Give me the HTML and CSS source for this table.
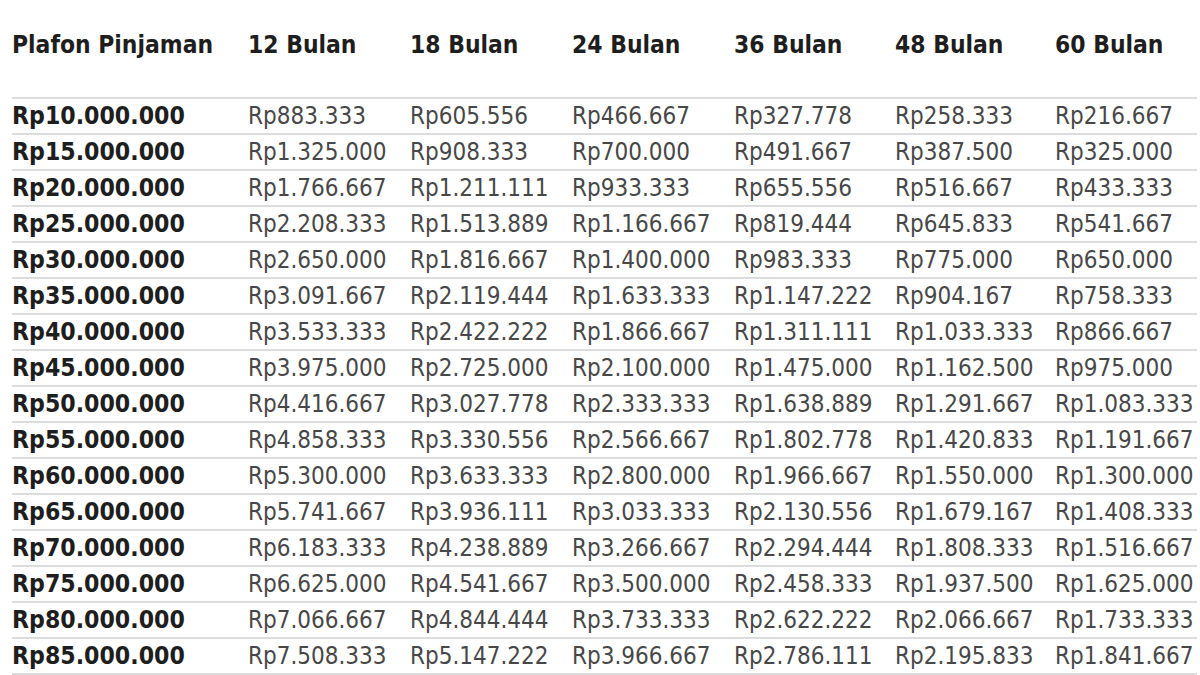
FILE: index.html
```html
<!DOCTYPE html>
<html lang="id">
<head>
<meta charset="utf-8">
<title>Tabel Angsuran</title>
<link rel="stylesheet" href="styles.css">
</head>
<body>
<div class="table">
  <div class="row head">
    <div>Plafon Pinjaman</div><div>12 Bulan</div><div>18 Bulan</div><div>24 Bulan</div><div>36 Bulan</div><div>48 Bulan</div><div>60 Bulan</div>
  </div>
  <div class="row"><div class="key">Rp10.000.000</div><div>Rp883.333</div><div>Rp605.556</div><div>Rp466.667</div><div>Rp327.778</div><div>Rp258.333</div><div>Rp216.667</div></div>
  <div class="row"><div class="key">Rp15.000.000</div><div>Rp1.325.000</div><div>Rp908.333</div><div>Rp700.000</div><div>Rp491.667</div><div>Rp387.500</div><div>Rp325.000</div></div>
  <div class="row"><div class="key">Rp20.000.000</div><div>Rp1.766.667</div><div>Rp1.211.111</div><div>Rp933.333</div><div>Rp655.556</div><div>Rp516.667</div><div>Rp433.333</div></div>
  <div class="row"><div class="key">Rp25.000.000</div><div>Rp2.208.333</div><div>Rp1.513.889</div><div>Rp1.166.667</div><div>Rp819.444</div><div>Rp645.833</div><div>Rp541.667</div></div>
  <div class="row"><div class="key">Rp30.000.000</div><div>Rp2.650.000</div><div>Rp1.816.667</div><div>Rp1.400.000</div><div>Rp983.333</div><div>Rp775.000</div><div>Rp650.000</div></div>
  <div class="row"><div class="key">Rp35.000.000</div><div>Rp3.091.667</div><div>Rp2.119.444</div><div>Rp1.633.333</div><div>Rp1.147.222</div><div>Rp904.167</div><div>Rp758.333</div></div>
  <div class="row"><div class="key">Rp40.000.000</div><div>Rp3.533.333</div><div>Rp2.422.222</div><div>Rp1.866.667</div><div>Rp1.311.111</div><div>Rp1.033.333</div><div>Rp866.667</div></div>
  <div class="row"><div class="key">Rp45.000.000</div><div>Rp3.975.000</div><div>Rp2.725.000</div><div>Rp2.100.000</div><div>Rp1.475.000</div><div>Rp1.162.500</div><div>Rp975.000</div></div>
  <div class="row"><div class="key">Rp50.000.000</div><div>Rp4.416.667</div><div>Rp3.027.778</div><div>Rp2.333.333</div><div>Rp1.638.889</div><div>Rp1.291.667</div><div>Rp1.083.333</div></div>
  <div class="row"><div class="key">Rp55.000.000</div><div>Rp4.858.333</div><div>Rp3.330.556</div><div>Rp2.566.667</div><div>Rp1.802.778</div><div>Rp1.420.833</div><div>Rp1.191.667</div></div>
  <div class="row"><div class="key">Rp60.000.000</div><div>Rp5.300.000</div><div>Rp3.633.333</div><div>Rp2.800.000</div><div>Rp1.966.667</div><div>Rp1.550.000</div><div>Rp1.300.000</div></div>
  <div class="row"><div class="key">Rp65.000.000</div><div>Rp5.741.667</div><div>Rp3.936.111</div><div>Rp3.033.333</div><div>Rp2.130.556</div><div>Rp1.679.167</div><div>Rp1.408.333</div></div>
  <div class="row"><div class="key">Rp70.000.000</div><div>Rp6.183.333</div><div>Rp4.238.889</div><div>Rp3.266.667</div><div>Rp2.294.444</div><div>Rp1.808.333</div><div>Rp1.516.667</div></div>
  <div class="row"><div class="key">Rp75.000.000</div><div>Rp6.625.000</div><div>Rp4.541.667</div><div>Rp3.500.000</div><div>Rp2.458.333</div><div>Rp1.937.500</div><div>Rp1.625.000</div></div>
  <div class="row"><div class="key">Rp80.000.000</div><div>Rp7.066.667</div><div>Rp4.844.444</div><div>Rp3.733.333</div><div>Rp2.622.222</div><div>Rp2.066.667</div><div>Rp1.733.333</div></div>
  <div class="row last"><div class="key">Rp85.000.000</div><div>Rp7.508.333</div><div>Rp5.147.222</div><div>Rp3.966.667</div><div>Rp2.786.111</div><div>Rp2.195.833</div><div>Rp1.841.667</div></div>
</div>
</body>
</html>
```
FILE: styles.css
```css
html, body {
  margin: 0;
  padding: 0;
  background: #ffffff;
}
body {
  font-family: "DejaVu Sans Condensed", "DejaVu Sans", Verdana, sans-serif;
  color: #474747;
  width: 1200px;
  height: 675px;
  overflow: hidden;
}
.table {
  padding-left: 12px;
  width: 1185px;
}
.row {
  display: grid;
  grid-template-columns: 236px 162px 162px 162px 161px 160px 142px;
  align-items: center;
  height: 34px;
  border-top: 2px solid #dcdcdc;
  font-size: 24px;
  line-height: 34px;
  white-space: nowrap;
}
.row.last {
  border-bottom: 2px solid #dcdcdc;
}
.row.head {
  border-top: none;
  height: 86px;
  padding-top: 2px;
  padding-bottom: 9px;
  font-weight: bold;
  font-size: 24.4px;
  color: #1e1e1e;
}
.row.head > div {
  padding-bottom: 0;
}
.key {
  font-weight: bold;
  color: #1e1e1e;
  font-size: 24.6px;
}
```
